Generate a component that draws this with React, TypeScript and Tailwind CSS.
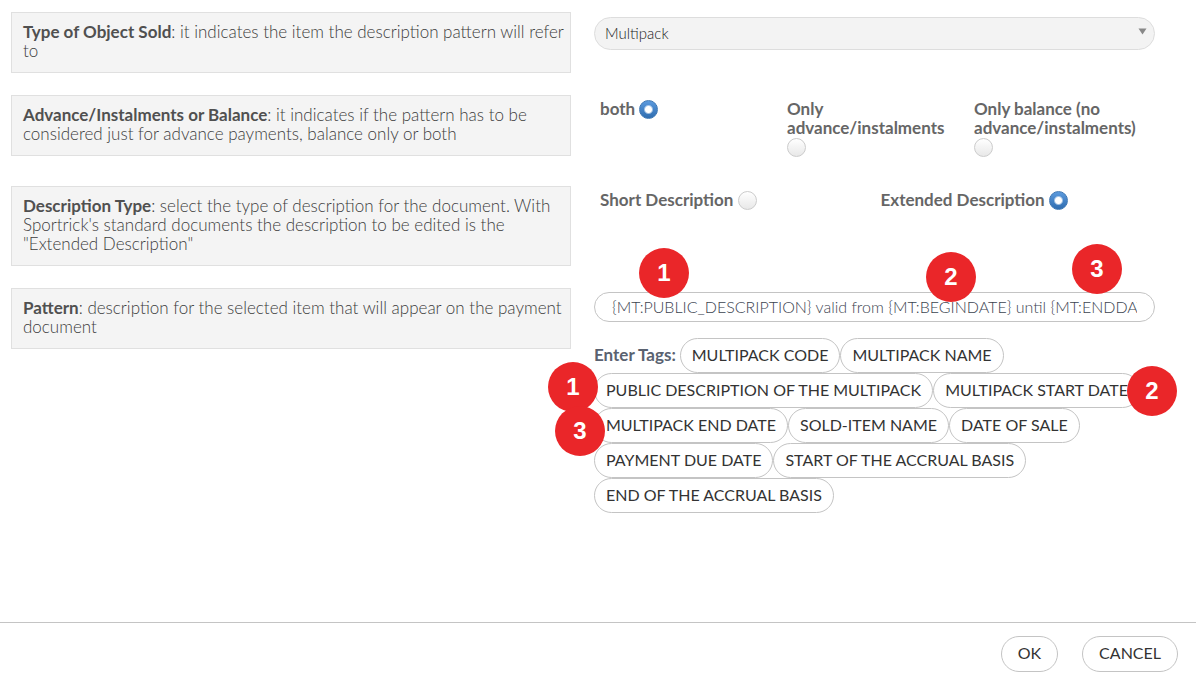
import { useState, type ReactNode } from 'react';

const tags = [
  'MULTIPACK CODE',
  'MULTIPACK NAME',
  'PUBLIC DESCRIPTION OF THE MULTIPACK',
  'MULTIPACK START DATE',
  'MULTIPACK END DATE',
  'SOLD-ITEM NAME',
  'DATE OF SALE',
  'PAYMENT DUE DATE',
  'START OF THE ACCRUAL BASIS',
  'END OF THE ACCRUAL BASIS',
];

const paymentOptions = ['both', 'Only advance/instalments', 'Only balance (no advance/instalments)'];
const descriptionOptions = ['Short Description', 'Extended Description'];

function Help({ id, title, children }: { id: string; title: string; children: ReactNode }) {
  return (
    <div className="self-start border border-[#e0e0e0] bg-[#f4f4f4] pt-[9px] pr-1 pb-3 pl-[11px] text-[17px] leading-[19px] text-[#3c3c3c]">
      <strong id={id} className="font-bold text-[#505050]">{title}</strong>: {children}
    </div>
  );
}

interface RadioOptionProps {
  name: string;
  label: string;
  checked: boolean;
  onChange: () => void;
}

function RadioOption({ name, label, checked, onChange }: RadioOptionProps) {
  return (
    <label className="block pr-3 pl-1.5 text-[17px] leading-[19px] font-bold text-[#666]">
      {label}{' '}
      <input
        type="radio"
        name={name}
        checked={checked}
        onChange={onChange}
        className="mt-px h-[19px] w-[19px] appearance-none rounded-full border border-[#ccc] bg-linear-to-b from-white to-[#e8e8e8] align-top checked:border-[#3f78b4] checked:bg-[radial-gradient(circle,#fff_3px,transparent_5px),linear-gradient(#5b9ade,#2f6db0)]"
      />
    </label>
  );
}

function Badge({ n, className }: { n: number; className: string }) {
  return (
    <span
      className={`pointer-events-none absolute z-10 flex h-[50px] w-[50px] items-center justify-center rounded-full bg-[#ea2629] font-['Liberation_Sans',sans-serif] text-2xl font-bold text-white ${className}`}
    >
      {n}
    </span>
  );
}

export default function App() {
  const [payment, setPayment] = useState('both');
  const [description, setDescription] = useState('Extended Description');
  const [pattern, setPattern] = useState(
    '{MT:PUBLIC_DESCRIPTION} valid from {MT:BEGINDATE} until {MT:ENDDATE}'
  );

  return (
    <form
      onSubmit={(e) => e.preventDefault()}
      className="flex min-h-screen flex-col bg-white font-[Lato,sans-serif] text-[16px] leading-[19px] font-light text-[#555]"
    >
      <main className="flex flex-1 flex-col pt-3 pr-[41px] pb-6 pl-[11px]">
        {/* Type of object */}
        <div className="grid grid-cols-[560fr_561fr] gap-x-[23px] pb-[22px]">
          <Help id="object-type" title="Type of Object Sold">
            it indicates the item the description pattern will refer to
          </Help>
          <div className="relative mt-[5px] self-start">
            <select
              aria-labelledby="object-type"
              className="block h-[33px] w-full appearance-none rounded-full border border-[#ddd] bg-[#f3f3f3] px-2.5 text-[15px] text-[#222]"
            >
              <option>Multipack</option>
            </select>
            <svg className="pointer-events-none absolute top-[11px] right-2 h-[7px] w-[9px]" viewBox="0 0 9 7">
              <path d="M0.5 0.5h8L4.5 6.5z" fill="#888" />
            </svg>
          </div>
        </div>

        {/* Advance or balance */}
        <div className="grid grid-cols-[560fr_561fr] gap-x-[23px] pb-[29px]">
          <Help id="payment-type" title="Advance/Instalments or Balance">
            it indicates if the pattern has to be considered just for advance payments, balance only or both
          </Help>
          <div role="radiogroup" aria-labelledby="payment-type" className="grid grid-cols-3 pt-1">
            {paymentOptions.map((option) => (
              <RadioOption
                key={option}
                name="payment"
                label={option}
                checked={payment === option}
                onChange={() => setPayment(option)}
              />
            ))}
          </div>
        </div>

        {/* Description type */}
        <div className="grid grid-cols-[560fr_561fr] gap-x-[23px] pb-[22px]">
          <Help id="description-type" title="Description Type">
            select the type of description for the document. With Sportrick's standard documents the
            description to be edited is the "Extended Description"
          </Help>
          <div role="radiogroup" aria-labelledby="description-type" className="grid grid-cols-2 pt-1">
            {descriptionOptions.map((option) => (
              <RadioOption
                key={option}
                name="description"
                label={option}
                checked={description === option}
                onChange={() => setDescription(option)}
              />
            ))}
          </div>
        </div>

        {/* Pattern */}
        <div className="grid grid-cols-[560fr_561fr] gap-x-[23px]">
          <Help id="pattern" title="Pattern">
            description for the selected item that will appear on the payment document
          </Help>
          <div className="pt-1">
            <div className="relative">
              <div className="h-[30px] rounded-full border border-[#c4c4c4] px-[17px]">
                <input
                  type="text"
                  aria-labelledby="pattern"
                  value={pattern}
                  onChange={(e) => setPattern(e.target.value)}
                  className="block h-full w-full pb-0.5 text-[#3c4450] outline-none"
                />
              </div>
              <Badge n={1} className="-top-11 left-[45px]" />
              <Badge n={2} className="-top-10 right-[179px]" />
              <Badge n={3} className="-top-12 right-[33px]" />
            </div>
            <div className="relative mt-4 flex flex-wrap items-center">
              <span className="mr-1 pb-0.5 text-[17px] font-bold text-[#5a6270]">Enter Tags:</span>
              {tags.map((tag) => (
                <button
                  key={tag}
                  type="button"
                  onClick={() => setPattern(`${pattern} {${tag}}`)}
                  className="h-[35px] rounded-full border border-[#c4c4c4] bg-white px-[11px] pb-0.5 font-normal text-[#333]"
                >
                  {tag}
                </button>
              ))}
              <Badge n={1} className="top-6 -left-[46px]" />
              <Badge n={3} className="top-[68px] -left-[39px]" />
              <Badge n={2} className="top-7 -right-[22px]" />
            </div>
          </div>
        </div>
      </main>

      <footer className="flex justify-end gap-6 border-t border-[#c4c4c4] pt-[13px] pr-[18px] pb-3">
        <button type="submit" className="h-9 rounded-full border border-[#c4c4c4] px-4 pb-[3px] font-normal text-[#333]">OK</button>
        <button type="button" className="h-9 rounded-full border border-[#c4c4c4] px-4 pb-[3px] font-normal text-[#333]">CANCEL</button>
      </footer>
    </form>
  );
}
